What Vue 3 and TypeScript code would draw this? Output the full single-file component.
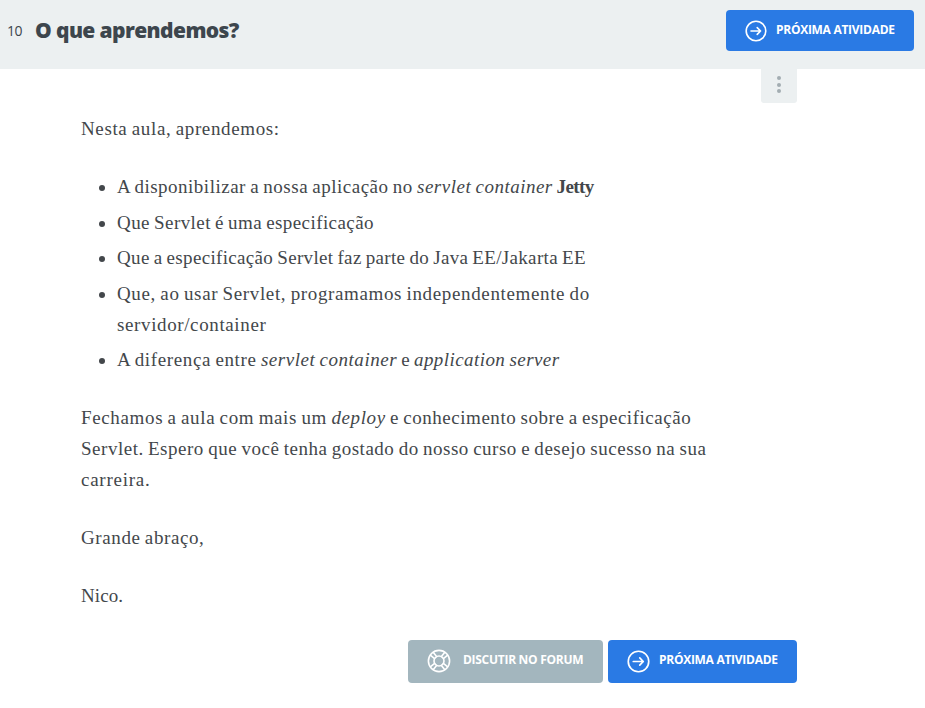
<script setup lang="ts">
interface Segment {
  text: string
  kind?: 'em' | 'strong'
  tracking: number
}
type Line = Segment[]

const items: Line[][] = [
  [[
    { text: 'A disponibilizar a nossa aplicação no ', tracking: 0.5 },
    { text: 'servlet container', kind: 'em', tracking: 0.5 },
    { text: ' ', tracking: 0 },
    { text: 'Jetty', kind: 'strong', tracking: -0.6 },
  ]],
  [[{ text: 'Que Servlet é uma especificação', tracking: 0.42 }]],
  [[{ text: 'Que a especificação Servlet faz parte do Java EE/Jakarta EE', tracking: 0.33 }]],
  [
    [{ text: 'Que, ao usar Servlet, programamos independentemente do', tracking: 0.64 }],
    [{ text: 'servidor/container', tracking: 0.62 }],
  ],
  [[
    { text: 'A diferença entre ', tracking: 0.63 },
    { text: 'servlet container', kind: 'em', tracking: 0.53 },
    { text: ' e ', tracking: 0.3 },
    { text: 'application server', kind: 'em', tracking: 0.43 },
  ]],
]

const intro: Line[] = [[{ text: 'Nesta aula, aprendemos:', tracking: 0.63 }]]
const closing: Line[][] = [
  [
    [
      { text: 'Fechamos a aula com mais um ', tracking: 0.64 },
      { text: 'deploy', kind: 'em', tracking: 0.6 },
      { text: ' e conhecimento sobre a especificação', tracking: 0.54 },
    ],
    [{ text: 'Servlet. Espero que você tenha gostado do nosso curso e desejo sucesso na sua', tracking: 0.52 }],
    [{ text: 'carreira.', tracking: 0.75 }],
  ],
  [[{ text: 'Grande abraço,', tracking: 0.6 }]],
  [[{ text: 'Nico.', tracking: 0.1 }]],
]
</script>

<template>
  <div class="page">
    <header class="header">
      <span class="number">10</span>
      <h1 class="title">O que aprendemos?</h1>
      <a class="button next-top">
        <svg class="icon" width="22" height="22" viewBox="0 0 22 22">
          <circle cx="11" cy="11" r="9.8" />
          <path d="M6 11H15.6M12.2 7.6L15.6 11L12.2 14.4" />
        </svg>
        <span class="label">PRÓXIMA ATIVIDADE</span>
      </a>
    </header>
    <main class="content">
      <button class="menu" aria-label="Opções"><i></i><i></i><i></i></button>
      <article class="text">
        <p>
          <span v-for="(line, n) in intro" :key="n" class="line"><span v-for="(s, k) in line" :key="k" :style="{ letterSpacing: s.tracking + 'px' }">{{ s.text }}</span></span>
        </p>
        <ul>
          <li v-for="(item, i) in items" :key="i">
            <span v-for="(line, n) in item" :key="n" class="line"><component :is="s.kind ?? 'span'" v-for="(s, k) in line" :key="k" :style="{ letterSpacing: s.tracking + 'px' }">{{ s.text }}</component></span>
          </li>
        </ul>
        <p v-for="(para, i) in closing" :key="i">
          <span v-for="(line, n) in para" :key="n" class="line"><component :is="s.kind ?? 'span'" v-for="(s, k) in line" :key="k" :style="{ letterSpacing: s.tracking + 'px' }">{{ s.text }}</component></span>
        </p>
      </article>
      <footer class="actions">
        <a class="button forum">
          <svg class="icon" width="24" height="24" viewBox="0 0 24 24">
            <circle cx="12" cy="12" r="10.6" />
            <circle cx="12" cy="12" r="5" />
            <path d="M7.6 9.6L3.6 6.4M9.6 7.6L6.4 3.6M14.4 7.6L17.6 3.6M16.4 9.6L20.4 6.4M16.4 14.4L20.4 17.6M14.4 16.4L17.6 20.4M9.6 16.4L6.4 20.4M7.6 14.4L3.6 17.6" />
          </svg>
          <span class="label">DISCUTIR NO FORUM</span>
        </a>
        <a class="button next-bottom">
          <svg class="icon" width="23" height="23" viewBox="0 0 22 22">
            <circle cx="11" cy="11" r="9.8" />
            <path d="M6 11H15.6M12.2 7.6L15.6 11L12.2 14.4" />
          </svg>
          <span class="label">PRÓXIMA ATIVIDADE</span>
        </a>
      </footer>
    </main>
  </div>
</template>

<style>
body { margin: 0; background: #fff; }
</style>

<style scoped>
.page {
  width: 925px;
  height: 708px;
  overflow: hidden;
  box-sizing: border-box;
  background: #fff;
  color: #3d464d;
  font-family: "Open Sans", sans-serif;
}
.header {
  display: flex;
  align-items: flex-start;
  height: 69px;
  padding: 0 11px 0 7px;
  box-sizing: border-box;
  background: #ecf0f1;
}
.number { width: 29px; font-size: 14px; line-height: 20px; padding-top: 21px; letter-spacing: -0.4px; }
.title { margin: 0 0 0 -1px; padding-top: 15px; font-size: 21px; line-height: 30px; font-weight: 800; letter-spacing: -0.6px; white-space: nowrap; }
.button {
  display: flex;
  align-items: center;
  box-sizing: border-box;
  border-radius: 4px;
  background: #2a7ae4;
  color: #fff;
  font-size: 12px;
  font-weight: 700;
  letter-spacing: -0.28px;
  white-space: nowrap;
}
.label { line-height: 16px; margin-top: -2px; }
.icon { flex: none; fill: none; stroke: currentColor; stroke-width: 1.6; stroke-linecap: round; stroke-linejoin: round; }
.next-top { width: 188px; height: 41px; margin: 10px 0 0 auto; padding-left: 19px; gap: 9px; }
.content { width: 716px; margin-left: 81px; display: flex; flex-direction: column; }
.menu {
  align-self: flex-end;
  display: flex;
  flex-direction: column;
  align-items: center;
  justify-content: center;
  gap: 2.5px;
  width: 36px;
  height: 34px;
  padding: 0 0 3px;
  border: 0;
  border-radius: 0 0 3px 3px;
  background: #ecf0f1;
}
.menu i { width: 4px; height: 4px; border-radius: 50%; background: #a3adb2; }
.text {
  margin-top: 10px;
  color: #43474b;
  font-family: "Liberation Serif", serif;
  font-size: 19px;
  line-height: 31px;
  word-spacing: -1px;
}
.text p { margin: 0 0 27px; }
.text ul { margin: 0 0 27px; padding-left: 36px; }
.text li { margin-bottom: 4.6px; }
.text li:last-child { margin-bottom: 0; }
.line { display: block; white-space: pre; }
.text li .line:first-child { display: inline-block; vertical-align: top; }
.actions { display: flex; justify-content: flex-end; gap: 5px; margin-top: 2px; }
.forum { width: 195px; height: 43px; padding-left: 19px; gap: 12px; background: #a3b6be; }
.next-bottom { width: 189px; height: 43px; padding-left: 19px; gap: 9px; }
.forum .label, .next-bottom .label { margin-top: -3px; }
.forum .icon { margin-top: -1px; }
</style>
